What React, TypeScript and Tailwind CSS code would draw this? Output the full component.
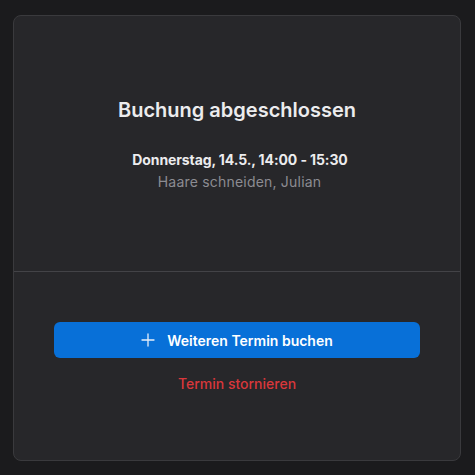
import React from "react";

export default function App() {
  return (
    <div
      className="w-[475px] h-[475px] bg-[#1b1b1d] pt-[15px] pl-[13px]"
      style={{ fontFamily: "Inter, 'Noto Sans', sans-serif" }}
    >
      <div className="w-[448px] h-[446px] bg-[#27272a] border border-[#3a3a3d] rounded-[8px] flex flex-col">
        <div className="h-[256px] border-b border-[#434347] flex flex-col items-center pt-[80px]">
          <h1 className="text-[20px] leading-[28px] font-semibold text-[#ececee] tracking-[0px]">
            Buchung abgeschlossen
          </h1>
          <div className="mt-[26px] text-[14px] leading-[20px] font-bold text-[#ececee] tracking-[-0.1px] pl-[6px]">
            Donnerstag, 14.5., 14:00 - 15:30
          </div>
          <div className="mt-[2px] text-[14px] leading-[20px] text-[#8c8c92] tracking-[0.2px] pl-[5px]">
            Haare schneiden, Julian
          </div>
        </div>
        <div className="flex flex-col items-center pt-[50px]">
          <button className="w-[366px] h-[36px] rounded-[6px] bg-[#0870d8] flex items-center justify-center gap-[12px] text-white text-[14px] font-semibold">
            <svg width="14" height="14" viewBox="0 0 14 14" fill="none" stroke="#e6eefa" strokeWidth="1.3" strokeLinecap="round">
              <path d="M7 1v12M1 7h12" />
            </svg>
            <span>Weiteren Termin buchen</span>
          </button>
          <div className="mt-[16px] text-[14px] leading-[20px] font-medium text-[#d9373b]">
            Termin stornieren
          </div>
        </div>
      </div>
    </div>
  );
}
